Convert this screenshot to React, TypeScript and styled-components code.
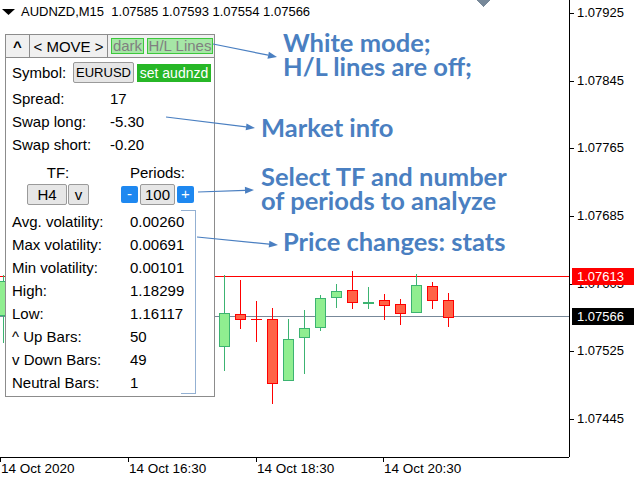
import styled, { createGlobalStyle } from "styled-components"

const GlobalStyle = createGlobalStyle`
  html, body { margin: 0; padding: 0; background: #fff; }
  body {
    width: 640px;
    height: 480px;
    overflow: hidden;
    font-family: "Liberation Sans", Arial, sans-serif;
  }
`

const Screen = styled.div`
  display: grid;
  grid-template-columns: 569px 71px;
  grid-template-rows: 457px 23px;
  width: 640px;
  height: 480px;
  background: #fff;
`

const Chart = styled.div`
  position: relative;
  overflow: hidden;
`

const Candles = styled.svg`
  position: absolute;
  left: 0;
  top: 0;
`

const Title = styled.div`
  position: absolute;
  left: 2px;
  top: 4px;
  display: flex;
  align-items: center;
  gap: 6px;
  font-size: 13px;
  line-height: 16px;
  color: #000;
  white-space: pre;
`

const PriceAxis = styled.div`
  position: relative;
  border-left: 1px solid #000;
  font-size: 13px;
`

const PriceLabel = styled.div`
  position: absolute;
  left: 7px;
  line-height: 16px;
  color: #000;
  &::before {
    content: "";
    position: absolute;
    left: -7px;
    top: 8px;
    width: 4px;
    height: 1px;
    background: #000;
  }
`

const PriceBadge = styled.div<{ $bg: string }>`
  position: absolute;
  left: 2px;
  width: 62px;
  height: 17px;
  box-sizing: border-box;
  padding-left: 5px;
  line-height: 17px;
  background: ${(p) => p.$bg};
  color: #fff;
`

const TimeAxis = styled.div`
  position: relative;
  border-top: 1px solid #000;
  font-size: 13.5px;
`

const TimeLabel = styled.div`
  position: absolute;
  top: 3px;
  padding-left: 1px;
  line-height: 16px;
  white-space: nowrap;
  &::before {
    content: "";
    position: absolute;
    left: 0;
    top: -3px;
    width: 1px;
    height: 4px;
    background: #000;
  }
`

const Panel = styled.div`
  position: absolute;
  left: 5px;
  top: 34px;
  width: 210px;
  height: 363px;
  box-sizing: border-box;
  border: 1px solid #8c8c8c;
  background: #fff;
  font-size: 15px;
  color: #000;
`

const PanelHeader = styled.div`
  display: flex;
  align-items: center;
  height: 23px;
  box-sizing: border-box;
  border-bottom: 1px solid #8c8c8c;
  background: #f0f0f0;
`

const HeaderCell = styled.div<{ $w: number; $bold?: boolean }>`
  width: ${(p) => p.$w}px;
  height: 100%;
  border-right: 1px solid #8c8c8c;
  display: flex;
  align-items: center;
  justify-content: center;
  font-weight: ${(p) => (p.$bold ? 700 : 400)};
`

const Toggle = styled.div<{ $w: number }>`
  width: ${(p) => p.$w}px;
  height: 16px;
  box-sizing: border-box;
  margin-left: 3px;
  border: 1px solid #3cc83c;
  background: #a6e6a6;
  color: #808080;
  line-height: 14px;
  text-align: center;
`

const PanelBody = styled.div`
  padding: 0 0 0 6px;
`

const SymbolRow = styled.div`
  display: flex;
  align-items: center;
  height: 21px;
  margin-top: 4px;
`

const FieldLabel = styled.div<{ $w: number }>`
  width: ${(p) => p.$w}px;
`

const GreyBox = styled.div<{ $w: number; $small?: boolean }>`
  width: ${(p) => p.$w}px;
  height: 21px;
  box-sizing: border-box;
  border: 1px solid #9a9a9a;
  border-radius: 2px;
  background: #e6e6e6;
  font-size: ${(p) => (p.$small ? 13 : 15)}px;
  line-height: 19px;
  text-align: center;
  white-space: nowrap;
`

const SetButton = styled.div`
  width: 74px;
  height: 18px;
  margin-left: 3px;
  background: #27b727;
  color: #fff;
  font-size: 14px;
  line-height: 18px;
  text-align: center;
  white-space: nowrap;
`

const InfoList = styled.div`
  margin-top: 4px;
`

const InfoRow = styled.div<{ $labelW: number }>`
  display: grid;
  grid-template-columns: ${(p) => p.$labelW}px auto;
  align-items: center;
  height: 23px;
`

const TfSection = styled.div`
  display: flex;
  margin-top: 8px;
  padding-left: 15px;
  gap: 32px;
`

const TfGroup = styled.div<{ $w: number }>`
  display: flex;
  flex-direction: column;
  align-items: center;
  width: ${(p) => p.$w}px;
  gap: 2px;
`

const GroupLabel = styled.div`
  line-height: 18px;
`

const ButtonRow = styled.div<{ $gap: number }>`
  display: flex;
  align-items: center;
  gap: ${(p) => p.$gap}px;
`

const BlueButton = styled.div`
  width: 17px;
  height: 17px;
  border-radius: 2px;
  background: #1e88f0;
  color: #fff;
  line-height: 16px;
  text-align: center;
`

const StatsBox = styled.div`
  position: relative;
  width: 184px;
  margin-top: 5px;
  box-sizing: border-box;
  border-right: 1px solid #93b0d2;
  &::before,
  &::after {
    content: "";
    position: absolute;
    right: 0;
    width: 14px;
    height: 1px;
    background: #93b0d2;
  }
  &::before { top: 0; }
  &::after { bottom: 0; }
`

const Note = styled.div<{ $x: number; $y: number }>`
  position: absolute;
  left: ${(p) => p.$x}px;
  top: ${(p) => p.$y}px;
  font-family: Lato, "Open Sans", sans-serif;
  font-weight: 700;
  font-size: 25.5px;
  line-height: 23.5px;
  color: #4a7fc1;
  white-space: nowrap;
`

const Arrows = styled.svg`
  position: absolute;
  left: 0;
  top: 0;
  pointer-events: none;
`

type Candle = { x: number; hi: number; lo: number; top: number; bot: number; up: boolean }

const candles: Candle[] = [
  { x: 3, hi: 275, lo: 343, top: 281, bot: 315, up: true },
  { x: 224, hi: 275, lo: 371, top: 313, bot: 346, up: true },
  { x: 240, hi: 280, lo: 329, top: 314, bot: 319, up: false },
  { x: 256, hi: 301, lo: 342, top: 319, bot: 319, up: false },
  { x: 272, hi: 308, lo: 404, top: 319, bot: 383, up: false },
  { x: 288, hi: 319, lo: 380, top: 339, bot: 380, up: true },
  { x: 304, hi: 310, lo: 374, top: 328, bot: 337, up: true },
  { x: 320, hi: 295, lo: 331, top: 298, bot: 327, up: true },
  { x: 336, hi: 284, lo: 308, top: 291, bot: 297, up: true },
  { x: 352, hi: 271, lo: 309, top: 290, bot: 302, up: false },
  { x: 368, hi: 287, lo: 309, top: 302, bot: 302, up: true },
  { x: 384, hi: 294, lo: 320, top: 300, bot: 305, up: false },
  { x: 400, hi: 299, lo: 325, top: 304, bot: 313, up: false },
  { x: 416, hi: 274, lo: 312, top: 285, bot: 312, up: true },
  { x: 432, hi: 282, lo: 309, top: 286, bot: 300, up: false },
  { x: 448, hi: 293, lo: 327, top: 300, bot: 317, up: false },
]

const priceTicks = [
  { v: "1.07925", y: 13 },
  { v: "1.07845", y: 81 },
  { v: "1.07765", y: 148 },
  { v: "1.07685", y: 216 },
  { v: "1.07605", y: 284 },
  { v: "1.07525", y: 351 },
  { v: "1.07445", y: 419 },
]

const timeTicks = [
  { t: "14 Oct 2020", x: 0 },
  { t: "14 Oct 16:30", x: 128 },
  { t: "14 Oct 18:30", x: 256 },
  { t: "14 Oct 20:30", x: 383 },
]

const marketInfo = [
  ["Spread:", "17"],
  ["Swap long:", "-5.30"],
  ["Swap short:", "-0.20"],
]

const stats = [
  ["Avg. volatility:", "0.00260"],
  ["Max volatility:", "0.00691"],
  ["Min volatility:", "0.00101"],
  ["High:", "1.18299"],
  ["Low:", "1.16117"],
  ["^ Up Bars:", "50"],
  ["v Down Bars:", "49"],
  ["Neutral Bars:", "1"],
]

const arrows = [
  [213, 44, 277, 57],
  [166, 117, 255, 128],
  [198, 192, 254, 190],
  [197, 237, 278, 245],
]

function CandleChart() {
  return (
    <Candles width={569} height={457} shapeRendering="crispEdges">
      <line x1={0} y1={276.5} x2={569} y2={276.5} stroke="#ff0000" />
      <line x1={0} y1={316.5} x2={569} y2={316.5} stroke="#778899" />
      <polygon points="476,0 490,0 483,7" fill="#778899" />
      {candles.map((c) => {
        const wick = c.up ? "#3cb371" : "#ff0000"
        const fill = c.up ? "#90ee90" : "#ff6347"
        return (
          <g key={c.x}>
            <line x1={c.x + 0.5} y1={c.hi} x2={c.x + 0.5} y2={c.lo} stroke={wick} />
            {c.top === c.bot ? (
              <line x1={c.x - 5} y1={c.top + 0.5} x2={c.x + 6} y2={c.top + 0.5} stroke={wick} strokeWidth={c.up ? 2 : 1} />
            ) : (
              <rect x={c.x - 4.5} y={c.top + 0.5} width={10} height={c.bot - c.top} fill={fill} stroke={wick} />
            )}
          </g>
        )
      })}
    </Candles>
  )
}

function ArrowLines() {
  return (
    <Arrows width={569} height={457}>
      {arrows.map(([x1, y1, x2, y2]) => {
        const a = Math.atan2(y2 - y1, x2 - x1)
        const l = 9
        const w = 3.5
        const bx = x2 - l * Math.cos(a)
        const by = y2 - l * Math.sin(a)
        const px = -Math.sin(a) * w
        const py = Math.cos(a) * w
        return (
          <g key={x1 + "-" + y1}>
            <line x1={x1} y1={y1} x2={bx} y2={by} stroke="#4a7fc1" strokeWidth={1.2} />
            <polygon points={`${x2},${y2} ${bx + px},${by + py} ${bx - px},${by - py}`} fill="#4a7fc1" />
          </g>
        )
      })}
    </Arrows>
  )
}

export default function App() {
  return (
    <>
      <GlobalStyle />
      <Screen>
        <Chart>
          <CandleChart />
          <Title>
            <svg width={13} height={7}>
              <polygon points="0,0 13,0 6.5,6" fill="#000" />
            </svg>
            <span>AUDNZD,M15  1.07585 1.07593 1.07554 1.07566</span>
          </Title>

          <Panel>
            <PanelHeader>
              <HeaderCell $w={23} $bold>^</HeaderCell>
              <HeaderCell $w={77}>&lt; MOVE &gt;</HeaderCell>
              <Toggle $w={33}>dark</Toggle>
              <Toggle $w={66}>H/L Lines</Toggle>
            </PanelHeader>
            <PanelBody>
              <SymbolRow>
                <FieldLabel $w={61}>Symbol:</FieldLabel>
                <GreyBox $w={61} $small>EURUSD</GreyBox>
                <SetButton>set audnzd</SetButton>
              </SymbolRow>
              <InfoList>
                {marketInfo.map(([k, v]) => (
                  <InfoRow key={k} $labelW={98}>
                    <span>{k}</span>
                    <span>{v}</span>
                  </InfoRow>
                ))}
              </InfoList>
              <TfSection>
                <TfGroup $w={62}>
                  <GroupLabel>TF:</GroupLabel>
                  <ButtonRow $gap={1}>
                    <GreyBox $w={40}>H4</GreyBox>
                    <GreyBox $w={21}>v</GreyBox>
                  </ButtonRow>
                </TfGroup>
                <TfGroup $w={73}>
                  <GroupLabel>Periods:</GroupLabel>
                  <ButtonRow $gap={2}>
                    <BlueButton>-</BlueButton>
                    <GreyBox $w={35}>100</GreyBox>
                    <BlueButton>+</BlueButton>
                  </ButtonRow>
                </TfGroup>
              </TfSection>
              <StatsBox>
                {stats.map(([k, v]) => (
                  <InfoRow key={k} $labelW={118}>
                    <span>{k}</span>
                    <span>{v}</span>
                  </InfoRow>
                ))}
              </StatsBox>
            </PanelBody>
          </Panel>

          <Note $x={283} $y={31}>
            White mode;
            <br />
            H/L lines are off;
          </Note>
          <Note $x={261} $y={116}>Market info</Note>
          <Note $x={261} $y={165}>
            Select TF and number
            <br />
            of periods to analyze
          </Note>
          <Note $x={283} $y={230}>Price changes: stats</Note>

          <ArrowLines />
        </Chart>

        <PriceAxis>
          {priceTicks.map((p) => (
            <PriceLabel key={p.v} style={{ top: p.y - 8 }}>
              {p.v}
            </PriceLabel>
          ))}
          <PriceBadge $bg="#ff0000" style={{ top: 268 }}>1.07613</PriceBadge>
          <PriceBadge $bg="#000000" style={{ top: 308 }}>1.07566</PriceBadge>
        </PriceAxis>

        <TimeAxis>
          {timeTicks.map((t) => (
            <TimeLabel key={t.t} style={{ left: t.x }}>
              {t.t}
            </TimeLabel>
          ))}
        </TimeAxis>
        <div />
      </Screen>
    </>
  )
}
